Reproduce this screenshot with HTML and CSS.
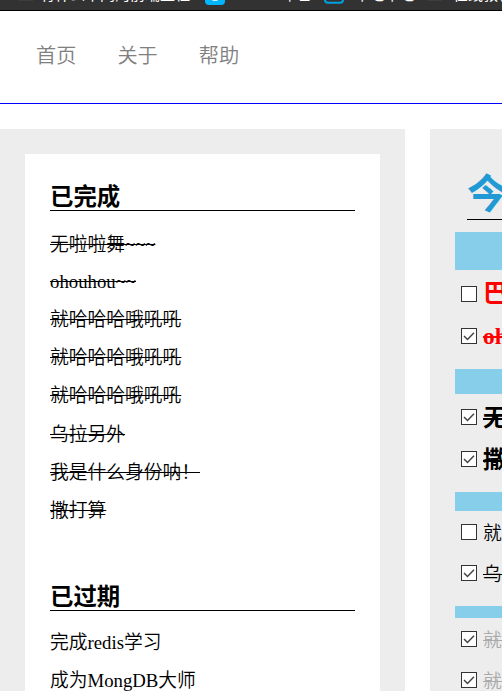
FILE: index.html
```html
<!DOCTYPE html>
<html lang="zh-CN">
<head>
<meta charset="utf-8">
<title>Todo</title>
<link rel="stylesheet" href="styles.css">
</head>
<body>
<div class="bookmarks">
  <i class="bm-dim"></i>
  <span class="bm bm-a">有什么不同的前端工程</span>
  <svg class="bm-icon" width="20" height="5" viewBox="0 0 20 5"><path d="M0 0H20V1Q20 5 16 5H4Q0 5 0 1Z" fill="#00b7ff"/><path d="M7.500 0.300H12.500" stroke="#fff" stroke-width="1"/></svg>
  <span class="bm bm-b">哔哩</span>
  <svg class="bm-icon" width="20" height="4" viewBox="0 0 20 4"><path d="M1 0V0Q1 2.700 4 2.700H16Q19 2.700 19 0" fill="none" stroke="#00a1e0" stroke-width="2"/></svg>
  <span class="bm bm-c">下七下七</span>
  <i class="bm-dim bm-dim-end"></i>
  <span class="bm bm-d">在线教程</span>
</div>
<nav class="nav"><a>首页</a><a>关于</a><a>帮助</a></nav>
<main class="columns">
  <section class="side">
    <div class="card">
      <h2>已完成</h2>
      <ul class="list done">
        <li><s>无啦啦舞~~~</s></li>
        <li><s>ohouhou~~</s></li>
        <li><s>就哈哈哈哦吼吼</s></li>
        <li><s>就哈哈哈哦吼吼</s></li>
        <li><s>就哈哈哈哦吼吼</s></li>
        <li><s>乌拉另外</s></li>
        <li><s>我是什么身份呐！</s></li>
        <li><s>撒打算</s></li>
      </ul>
      <h2>已过期</h2>
      <ul class="list late">
        <li>完成redis学习</li>
        <li>成为MongDB大师</li>
      </ul>
    </div>
  </section>
  <section class="today">
    <h1>今天</h1>
    <div class="group g1">
      <label class="task"><i class="box"></i><span>巴拉</span></label>
      <label class="task"><i class="box"><svg viewBox="0 0 14 14"><path d="M2 7L5.500 10.500L12 3.800"/></svg></i><s>ohouhou</s></label>
    </div>
    <div class="group g2">
      <label class="task"><i class="box"><svg viewBox="0 0 14 14"><path d="M2 7L5.500 10.500L12 3.800"/></svg></i><s>无啦</s></label>
      <label class="task"><i class="box"><svg viewBox="0 0 14 14"><path d="M2 7L5.500 10.500L12 3.800"/></svg></i><s>撒打</s></label>
    </div>
    <div class="group g3">
      <label class="task"><i class="box"></i><span>就哈</span></label>
      <label class="task"><i class="box"><svg viewBox="0 0 14 14"><path d="M2 7L5.500 10.500L12 3.800"/></svg></i><s>乌拉</s></label>
    </div>
    <div class="group g4">
      <label class="task"><i class="box"><svg viewBox="0 0 14 14"><path d="M2 7L5.500 10.500L12 3.800"/></svg></i><s>就哈</s></label>
      <label class="task"><i class="box"><svg viewBox="0 0 14 14"><path d="M2 7L5.500 10.500L12 3.800"/></svg></i><s>就哈</s></label>
    </div>
  </section>
</main>
</body>
</html>
```
FILE: styles.css
```css
* { box-sizing: border-box; }
html, body { height: 691px; overflow: hidden; }
body { margin: 0; background: #fff; color: #000; font-family: "Liberation Serif", "Noto Sans CJK SC", serif; font-size: 18.75px; }
.bookmarks { height: 11px; background: #323233; border-bottom: 1px solid #000; display: flex; align-items: flex-start; overflow: hidden; white-space: nowrap; padding-left: 19px; color: #fff; font: 15px/15px "Noto Sans CJK SC", sans-serif; }
.bookmarks > * { flex: none; }
.bm { height: 15px; margin-top: -14px; }
.bm-dim { width: 14px; height: 1px; margin-right: 7px; background: #413d3e; }
.bm-a { width: 165px; }
.bm-b { margin-left: 55px; width: 44px; }
.bm-c { margin-left: 11px; width: 73px; }
.bm-dim-end { margin-right: 11px; }
.nav { height: 93px; border-bottom: 1px solid #00f; display: flex; gap: 41px; padding: 31px 0 0 36px; font-size: 20.2px; line-height: 28px; color: #808080; font-weight: 350; }
.columns { display: flex; gap: 25px; padding-top: 25px; height: 587px; }
.side { flex: none; width: 405px; background: #ededed; padding: 25px 25px 0; }
.card { background: #fff; padding: 25px 25px 0; height: 537px; }
h2 { margin: 0; height: 32px; border-bottom: 1px solid #000; font-size: 23.4px; line-height: 36px; font-weight: 700; }
.list { list-style: none; margin: 15px 0 0; padding: 0; line-height: 38px; font-weight: 350; }
.list li { height: 38px; }
.done { height: 353px; }
.done li:first-child { height: 37px; }
.done li:nth-child(5) { height: 39px; }
.late { margin-top: 13px; }
.today { flex: none; width: 405px; background: #ededed; padding: 37px 25px 0; }
h1 { margin: 0 12px 12px; height: 54px; border-bottom: 1px solid #000; color: #2199d5; font-size: 40px; line-height: 58px; }
.group { border-top: solid skyblue; padding-left: 6px; }
.g1 { border-top-width: 38px; height: 137px; color: red; font-size: 23.4px; font-weight: 700; padding-top: 3px; }
.g1 span { font-size: 25px; line-height: 38px; }
.g2 { border-top-width: 25px; height: 123px; font-size: 24px; font-weight: 700; padding-top: 2px; }
.g2 s { margin-top: -4px; }
.g3 { border-top-width: 19px; height: 114px; }
.g4 { border-top-width: 12px; height: 94px; color: #aaa; }
.task { display: flex; align-items: center; gap: 6px; height: 42px; white-space: nowrap; }
.g3 .task, .g4 .task { height: 41px; font-weight: 350; }
.box { flex: none; width: 16px; height: 16px; border: 1px solid #333; background: #fff; }
.box svg { display: block; width: 14px; height: 14px; fill: none; stroke: #444; stroke-width: 1.5; }
```
